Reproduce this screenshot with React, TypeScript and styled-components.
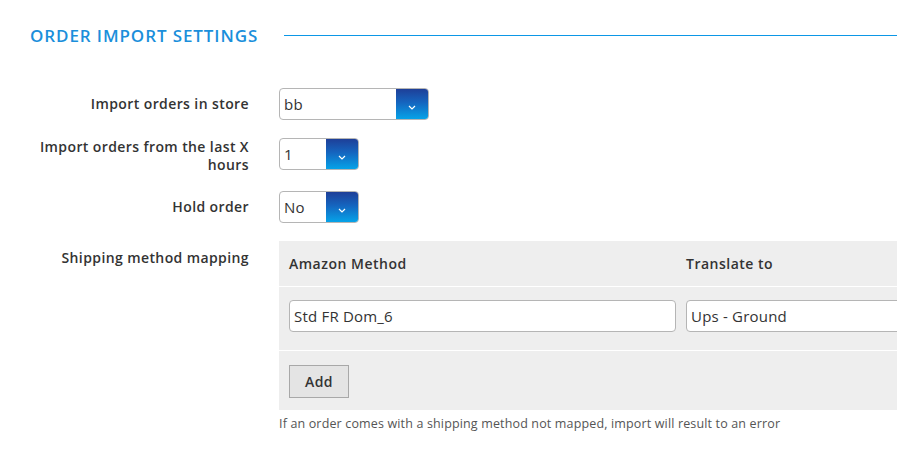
import React from 'react';
import styled, { createGlobalStyle } from 'styled-components';

const GlobalStyle = createGlobalStyle`
  html, body {
    margin: 0;
    padding: 0;
    background: #ffffff;
    overflow: hidden;
  }
  body {
    font-family: "Open Sans", "Liberation Sans", sans-serif;
    color: #333333;
  }
`;

const Page = styled.div`
  width: 1200px;
  padding-top: 25px;
`;

const HeadingRow = styled.div`
  display: flex;
  align-items: flex-start;
  height: 21px;
  padding-left: 30px;
  margin-bottom: 42px;
`;

const Title = styled.h2`
  margin: 0;
  font-size: 17px;
  font-weight: 600;
  letter-spacing: 0.9px;
  color: #1b8fdb;
  line-height: 21px;
`;

const Rule = styled.div`
  flex: 1;
  height: 1px;
  margin: 10px 0 0 26px;
  background-color: #0c97e6;
`;

const Form = styled.div`
  display: grid;
  grid-template-columns: 249px 1fr;
  column-gap: 30px;
  row-gap: 18px;
  align-items: center;
`;

const Label = styled.label<{ $top?: boolean }>`
  text-align: right;
  font-size: 14px;
  font-weight: 600;
  letter-spacing: 0.4px;
  line-height: 17.5px;
  color: #333333;
  align-self: ${({ $top }) => ($top ? 'start' : 'center')};
  padding-top: ${({ $top }) => ($top ? '8px' : '0')};
`;

const SelectBox = styled.div<{ $width: number; $top?: boolean }>`
  display: flex;
  width: ${({ $width }) => $width}px;
  height: 32px;
  box-sizing: border-box;
  border: 1px solid #b5b5b5;
  border-radius: 4px;
  overflow: hidden;
  background: #fff;
  align-self: ${({ $top }) => ($top ? 'start' : 'center')};
`;

const SelectValue = styled.div`
  flex: 1;
  padding-left: 4px;
  font-size: 15px;
  letter-spacing: 0.2px;
  line-height: 30px;
  color: #333;
`;

const SelectButton = styled.div`
  width: 32px;
  display: flex;
  align-items: center;
  justify-content: center;
  padding-top: 6px;
  box-sizing: border-box;
  background: linear-gradient(to bottom, #1e3f98 0%, #1565bf 45%, #06a3e8 100%);
`;

const Chevron = () => (
  <svg width="8" height="5" viewBox="0 0 8 5">
    <path d="M1 1 L4 4 L7 1" fill="none" stroke="#ffffff" strokeWidth="1.2" />
  </svg>
);

const Mapping = styled.div`
  background: #eeeeee;
  width: 900px;
`;

const MapRow = styled.div<{ $pad: string }>`
  display: grid;
  grid-template-columns: 387px 1fr;
  column-gap: 10px;
  align-items: start;
  padding: ${({ $pad }) => $pad};
  padding-left: 10px;
  & + & {
    border-top: 1px solid #ffffff;
  }
`;

const ColHead = styled.div`
  font-size: 14px;
  font-weight: 600;
  letter-spacing: 0.5px;
  line-height: 17px;
  color: #333;
`;

const TextInput = styled.input`
  height: 32px;
  box-sizing: border-box;
  width: 100%;
  border: 1px solid #b5b5b5;
  border-radius: 4px;
  padding: 0 4px;
  font-family: inherit;
  font-size: 15px;
  letter-spacing: 0.2px;
  color: #333;
  background: #fff;
  outline: none;
`;

const AddButton = styled.button`
  width: 60px;
  height: 33px;
  border: 1px solid #a8a8a8;
  background: #e4e4e4;
  font-family: inherit;
  font-size: 14px;
  font-weight: 600;
  letter-spacing: 0.4px;
  color: #333;
  cursor: pointer;
`;

const Hint = styled.div`
  font-size: 12.5px;
  letter-spacing: 0.15px;
  color: #555;
  margin-top: 5px;
`;

const Select: React.FC<{ value: string; width: number; top?: boolean }> = ({ value, width, top }) => (
  <SelectBox $width={width} $top={top}>
    <SelectValue>{value}</SelectValue>
    <SelectButton>
      <Chevron />
    </SelectButton>
  </SelectBox>
);

const App: React.FC = () => (
  <Page>
    <GlobalStyle />
    <HeadingRow>
      <Title>ORDER IMPORT SETTINGS</Title>
      <Rule />
    </HeadingRow>
    <Form>
      <Label>Import orders in store</Label>
      <Select value="bb" width={150} />

      <Label>
        Import orders from the last X
        <br />
        hours
      </Label>
      <Select value="1" width={80} top />

      <Label>Hold order</Label>
      <Select value="No" width={80} />

      <Label $top>Shipping method mapping</Label>
      <div>
        <Mapping>
          <MapRow $pad="14px 0">
            <ColHead>Amazon Method</ColHead>
            <ColHead>Translate to</ColHead>
          </MapRow>
          <MapRow $pad="13px 0 18px">
            <TextInput defaultValue="Std FR Dom_6" />
            <TextInput defaultValue="Ups - Ground" />
          </MapRow>
          <MapRow $pad="14px 0 12px">
            <AddButton>Add</AddButton>
          </MapRow>
        </Mapping>
        <Hint>If an order comes with a shipping method not mapped, import will result to an error</Hint>
      </div>
    </Form>
  </Page>
);

export default App;
